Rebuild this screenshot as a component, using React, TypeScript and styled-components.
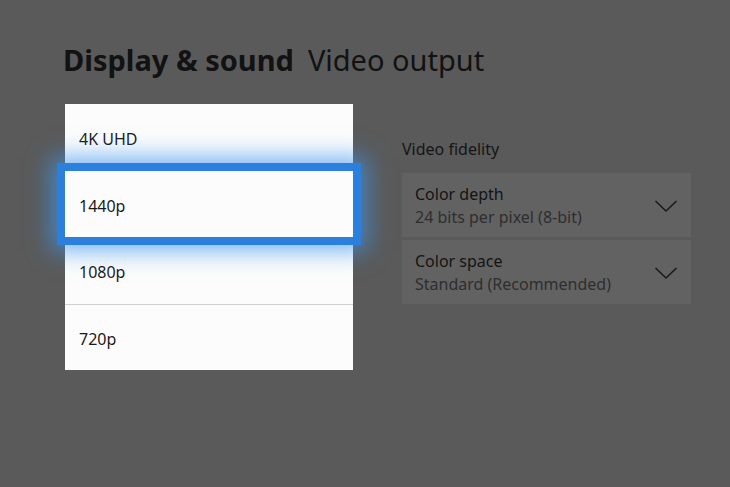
import React from "react";
import styled, { createGlobalStyle } from "styled-components";

const Global = createGlobalStyle`
  html, body { margin: 0; padding: 0; background: #5a5a5a; }
  body { font-family: "Noto Sans", "Open Sans", sans-serif; }
`;

const Screen = styled.div`
  width: 730px;
  height: 487px;
  background: #5a5a5a;
  box-sizing: border-box;
  padding: 40px 0 0 63px;
  overflow: hidden;
`;

const Header = styled.h1`
  margin: 0;
  display: flex;
  align-items: baseline;
  gap: 14px;
  font-size: 29px;
  line-height: 40px;
  color: #121212;
  font-weight: 400;
`;

const Section = styled.span`
  font-weight: 700;
`;

const Page = styled.span`
  font-weight: 400;
`;

const Body = styled.div`
  display: flex;
  align-items: flex-start;
  margin-top: 24px;
  padding-left: 2px;
  gap: 49px;
`;

const List = styled.div`
  width: 288px;
  background: #fcfcfc;
  display: flex;
  flex-direction: column;
`;

const Row = styled.div<{ $focused?: boolean; $divider?: boolean }>`
  height: 66.5px;
  display: flex;
  align-items: center;
  padding: 4px 0 0 14px;
  font-size: 16px;
  color: #1a1a1a;
  position: relative;
  background: #fcfcfc;
  border-top: ${(p) => (p.$divider ? "1px solid #d0d0d0" : "none")};
  box-sizing: border-box;
  z-index: ${(p) => (p.$focused ? 1 : 0)};
  box-shadow: ${(p) =>
    p.$focused
      ? "0 0 0 8px #2a80dc, 0 0 22px 14px rgba(60, 150, 240, 0.7)"
      : "none"};
`;

const Side = styled.div`
  width: 289px;
  display: flex;
  flex-direction: column;
  padding-top: 34px;
`;

const SideTitle = styled.div`
  font-size: 16px;
  color: #151515;
  line-height: 22px;
  margin-bottom: 13px;
`;

const Options = styled.div`
  display: flex;
  flex-direction: column;
  gap: 3px;
`;

const Option = styled.div`
  height: 64px;
  background: #626262;
  display: flex;
  align-items: center;
  justify-content: space-between;
  padding: 2px 13px 0 13px;
  box-sizing: border-box;
`;

const OptionText = styled.div`
  display: flex;
  flex-direction: column;
`;

const OptionLabel = styled.div`
  font-size: 16px;
  line-height: 23px;
  color: #141414;
`;

const OptionValue = styled.div`
  font-size: 16px;
  line-height: 23px;
  color: #2e2e2e;
`;

const Chevron = () => (
  <svg width="24" height="14" viewBox="0 0 24 14">
    <path d="M1.5 2 L12 12 L22.5 2" fill="none" stroke="#1a1a1a" strokeWidth="1.6" />
  </svg>
);

const resolutions = ["4K UHD", "1440p", "1080p", "720p"];

export default function App() {
  return (
    <>
      <Global />
      <Screen>
        <Header>
          <Section>Display &amp; sound</Section>
          <Page>Video output</Page>
        </Header>
        <Body>
          <List>
            {resolutions.map((r, i) => (
              <Row key={r} $focused={i === 1} $divider={i === 3}>
                {r}
              </Row>
            ))}
          </List>
          <Side>
            <SideTitle>Video fidelity</SideTitle>
            <Options>
              <Option>
                <OptionText>
                  <OptionLabel>Color depth</OptionLabel>
                  <OptionValue>24 bits per pixel (8-bit)</OptionValue>
                </OptionText>
                <Chevron />
              </Option>
              <Option>
                <OptionText>
                  <OptionLabel>Color space</OptionLabel>
                  <OptionValue>Standard (Recommended)</OptionValue>
                </OptionText>
                <Chevron />
              </Option>
            </Options>
          </Side>
        </Body>
      </Screen>
    </>
  );
}
